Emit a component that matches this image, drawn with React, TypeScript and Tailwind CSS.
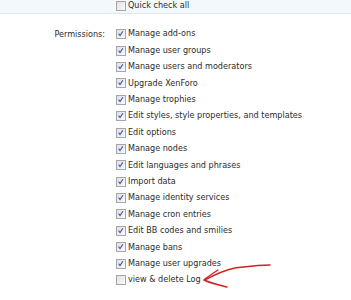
import React from "react";

const items: [string, boolean][] = [
  ["Manage add-ons", true],
  ["Manage user groups", true],
  ["Manage users and moderators", true],
  ["Upgrade XenForo", true],
  ["Manage trophies", true],
  ["Edit styles, style properties, and templates", true],
  ["Edit options", true],
  ["Manage nodes", true],
  ["Edit languages and phrases", true],
  ["Import data", true],
  ["Manage identity services", true],
  ["Manage cron entries", true],
  ["Edit BB codes and smilies", true],
  ["Manage bans", true],
  ["Manage user upgrades", true],
  ["view & delete Log", false],
];

function Box({ checked }: { checked: boolean }) {
  return (
    <span className="relative inline-block w-[10px] h-[10px] border border-[#a6a6a6] bg-gradient-to-br from-[#e0e0e0] to-[#fbfbfb] shrink-0">
      {checked && (
        <svg viewBox="0 0 10 10" className="absolute left-0 top-0 w-[8px] h-[8px]">
          <path d="M2 4.6 L3.8 7 L7.4 1.6" fill="none" stroke="#3557bd" strokeWidth="1.4" />
        </svg>
      )}
    </span>
  );
}

export default function App() {
  return (
    <div
      className="relative w-[351px] h-[300px] bg-white overflow-hidden text-[#2b2b2b] text-[9px]"
      style={{ fontFamily: "'DejaVu Sans Condensed', 'DejaVu Sans', sans-serif", fontStretch: "condensed" }}
    >
      <div className="h-[17px] bg-[#f3f8fc] border-b border-[#dfe7ef]">
        <div className="flex items-center gap-[2px] pl-[116px] -mt-[3px] h-[17px]">
          <Box checked={false} />
          <span>Quick check all</span>
        </div>
      </div>
      <div className="flex pt-[12px]">
        <div className="w-[105px] text-right h-[16.4px] leading-[16.4px]">Permissions:</div>
        <div className="pl-[11px] flex flex-col">
          {items.map(([t, c]) => (
            <div key={t} className="flex items-center gap-[2px] h-[16.4px]">
              <Box checked={c} />
              <span className="whitespace-nowrap">{t}</span>
            </div>
          ))}
        </div>
      </div>
      <svg className="absolute left-0 top-0" width="351" height="300" viewBox="0 0 351 300">
        <path d="M270 265 C255 265 245 267 235 268 C225 270 214 275 205 280" fill="none" stroke="#d42020" strokeWidth="1.4" strokeLinecap="round" />
        <path d="M218 270 C213 273 208 277 204 280 C210 283 219 285 227 287" fill="none" stroke="#d42020" strokeWidth="1.4" strokeLinecap="round" />
      </svg>
    </div>
  );
}
